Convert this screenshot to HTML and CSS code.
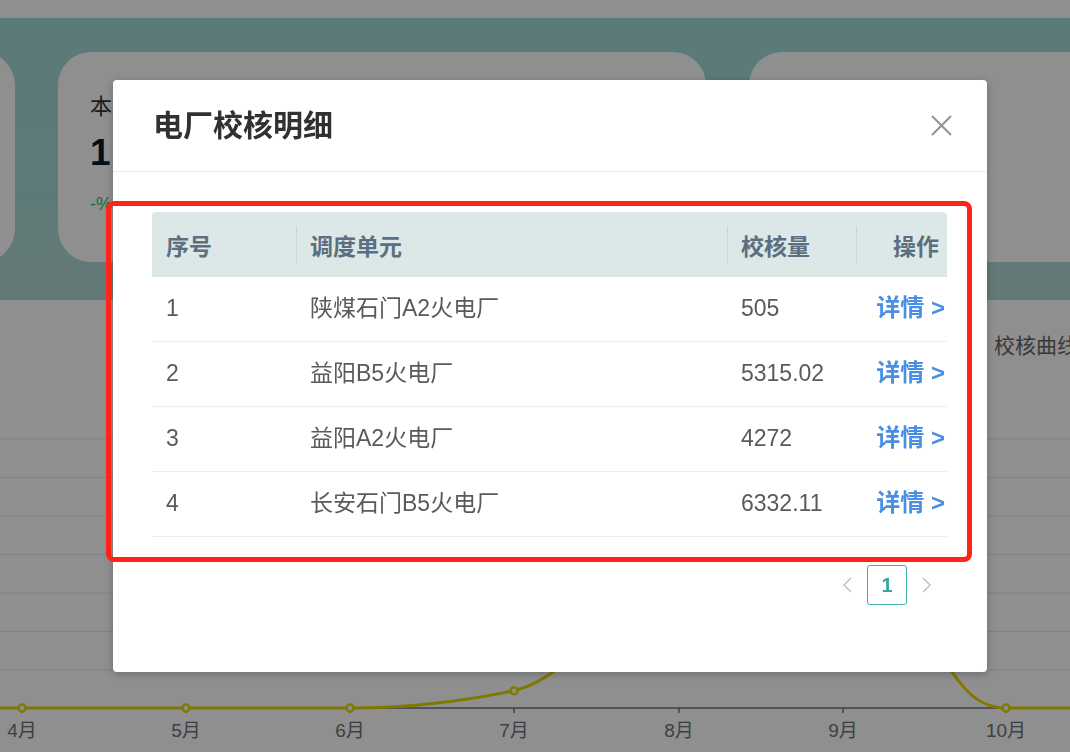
FILE: index.html
```html
<!DOCTYPE html>
<html lang="zh-CN">
<head>
<meta charset="utf-8">
<title>电厂校核明细</title>
<link rel="stylesheet" href="styles.css">
</head>
<body>
<div class="page">
  <div class="topbar"></div>
  <section class="band">
    <div class="cards">
      <div class="card"></div>
      <div class="card">
        <div class="card-label">本月校核电量</div>
        <div class="card-value">1<span class="card-unit">MWh</span></div>
        <div class="card-rate">-%</div>
      </div>
      <div class="card"></div>
    </div>
  </section>
  <section class="chart">
    <div class="chart-title">校核曲线</div>
    <svg class="chart-svg" width="1070" height="394" viewBox="0 0 1070 394">
      <g stroke="#e0e6f1" stroke-width="1">
        <line x1="0" y1="81" x2="1070" y2="81"/>
        <line x1="0" y1="119.5" x2="1070" y2="119.5"/>
        <line x1="0" y1="158" x2="1070" y2="158"/>
        <line x1="0" y1="196.5" x2="1070" y2="196.5"/>
        <line x1="0" y1="235" x2="1070" y2="235"/>
        <line x1="0" y1="273.5" x2="1070" y2="273.5"/>
        <line x1="0" y1="312" x2="1070" y2="312"/>
      </g>
      <line x1="0" y1="350" x2="1070" y2="350" stroke="#6e7079" stroke-width="1.5"/>
      <g stroke="#6e7079" stroke-width="1.5">
        <line x1="22" y1="350" x2="22" y2="355"/>
        <line x1="186" y1="350" x2="186" y2="355"/>
        <line x1="350" y1="350" x2="350" y2="355"/>
        <line x1="514" y1="350" x2="514" y2="355"/>
        <line x1="679" y1="350" x2="679" y2="355"/>
        <line x1="843" y1="350" x2="843" y2="355"/>
        <line x1="1006" y1="350" x2="1006" y2="355"/>
      </g>
      <g class="axis-label" fill="#6e7079" text-anchor="middle">
        <text x="22" y="379">4月</text>
        <text x="186" y="379">5月</text>
        <text x="350" y="379">6月</text>
        <text x="514" y="379">7月</text>
        <text x="679" y="379">8月</text>
        <text x="843" y="379">9月</text>
        <text x="1006" y="379">10月</text>
      </g>
      <path d="M-150,350 L350,350 C400,350 460,344 514,332.7 C530,329 545,320 556,312 C600,270 640,120 679,100 C720,80 800,80 843,110 C890,150 930,280 952,314 C965,333 980,350 1006,350 L1080,350" fill="none" stroke="#e6d700" stroke-width="3"/>
      <g fill="#fff" stroke="#e6d700" stroke-width="2.5">
        <circle cx="22" cy="350" r="3.5"/>
        <circle cx="186" cy="350" r="3.5"/>
        <circle cx="350" cy="350" r="3.5"/>
        <circle cx="514" cy="332.7" r="3.5"/>
        <circle cx="1006" cy="350" r="3.5"/>
      </g>
    </svg>
  </section>
</div>

<div class="mask">
  <div class="dialog">
    <div class="dialog-header">
      <h2 class="dialog-title">电厂校核明细</h2>
      <button class="dialog-close" aria-label="关闭">
        <svg width="21" height="21" viewBox="0 0 21 21"><path d="M1 1 L20 20 M20 1 L1 20" stroke="#909399" stroke-width="2" fill="none"/></svg>
      </button>
    </div>
    <div class="dialog-body">
      <table class="grid">
        <colgroup>
          <col class="c1"><col class="c2"><col class="c3"><col class="c4">
        </colgroup>
        <thead>
          <tr><th>序号</th><th>调度单元</th><th>校核量</th><th class="op">操作</th></tr>
        </thead>
        <tbody>
          <tr><td>1</td><td>陕煤石门A2火电厂</td><td>505</td><td class="op"><a class="link" href="#">详情 &gt;</a></td></tr>
          <tr><td>2</td><td>益阳B5火电厂</td><td>5315.02</td><td class="op"><a class="link" href="#">详情 &gt;</a></td></tr>
          <tr><td>3</td><td>益阳A2火电厂</td><td>4272</td><td class="op"><a class="link" href="#">详情 &gt;</a></td></tr>
          <tr><td>4</td><td>长安石门B5火电厂</td><td>6332.11</td><td class="op"><a class="link" href="#">详情 &gt;</a></td></tr>
        </tbody>
      </table>
      <div class="pager">
        <span class="pg-btn"><svg width="12" height="16" viewBox="0 0 12 16"><polyline points="10,1 3,8 10,15" fill="none" stroke="#c0c4cc" stroke-width="1.6"/></svg></span>
        <span class="pg-btn pg-num">1</span>
        <span class="pg-btn"><svg width="12" height="16" viewBox="0 0 12 16"><polyline points="2,1 9,8 2,15" fill="none" stroke="#c0c4cc" stroke-width="1.6"/></svg></span>
      </div>
    </div>
    <div class="highlight"></div>
  </div>
</div>
</body>
</html>
```

FILE: styles.css
```css
* {
  box-sizing: border-box;
  margin: 0;
  padding: 0;
}

html,
body {
  width: 1070px;
  height: 752px;
  overflow: hidden;
}

body {
  font-family: "Liberation Sans", "Noto Sans CJK SC", sans-serif;
  background: #fff;
}

.page {
  width: 1070px;
  height: 752px;
  overflow: hidden;
}

.topbar {
  height: 18px;
  background: #fff;
}

.band {
  height: 282px;
  padding-top: 34px;
  background: linear-gradient(180deg, #a3dbd7 0%, #a6dad6 60%, #b4d8d5 100%);
  overflow: hidden;
}

.cards {
  display: flex;
  gap: 43px;
  margin-left: -633px;
}

.card {
  flex: 0 0 648px;
  height: 210px;
  background: #fff;
  border-radius: 33px;
  padding: 41px 0 0 32px;
}

.card-label {
  font-size: 22px;
  line-height: 28px;
  color: #333;
  white-space: nowrap;
}

.card-value {
  margin-top: 12px;
  font-size: 37px;
  line-height: 40px;
  font-weight: 700;
  color: #0b1a33;
}

.card-unit {
  font-size: 18px;
  font-weight: 400;
  color: #f5a623;
  margin-left: 6px;
}

.card-rate {
  margin-top: 14px;
  font-size: 18px;
  line-height: 22px;
  color: #2fbf71;
}

.chart {
  height: 452px;
  background: #fff;
}

.chart-title {
  padding-top: 34px;
  margin-left: 994px;
  font-size: 21px;
  line-height: 24px;
  color: #666;
  white-space: nowrap;
}

.chart-svg {
  display: block;
}

.axis-label {
  font-size: 19px;
  font-family: "Liberation Sans", "Noto Sans CJK SC", sans-serif;
}

.mask {
  position: fixed;
  inset: 0;
  background: rgba(0, 0, 0, 0.44);
}

.dialog {
  position: relative;
  width: 874px;
  margin: 80px 0 0 113px;
  background: #fff;
  border-radius: 4px;
  box-shadow: 0 2px 10px rgba(0, 0, 0, 0.25);
}

.dialog-header {
  height: 92px;
  display: flex;
  align-items: center;
  justify-content: space-between;
  padding: 0 35px 0 40px;
  border-bottom: 1px solid #ececec;
}

.dialog-title {
  font-size: 30px;
  line-height: 1;
  font-weight: 700;
  color: #303133;
}

.dialog-close {
  border: 0;
  background: none;
  width: 21px;
  height: 21px;
  display: flex;
}

.dialog-body {
  padding: 40px 40px 67px 39px;
}

.grid {
  width: 795px;
  table-layout: fixed;
  border-collapse: separate;
  border-spacing: 0;
}

.c1 { width: 144px; }
.c2 { width: 431px; }
.c3 { width: 129px; }
.c4 { width: 91px; }

.grid th {
  position: relative;
  height: 65px;
  background: #dce8e8;
  font-size: 23px;
  font-weight: 700;
  color: #5b6f80;
  text-align: left;
  padding: 0 14px;
  vertical-align: middle;
  white-space: nowrap;
}

.grid th:first-child {
  border-top-left-radius: 4px;
}

.grid th:last-child {
  border-top-right-radius: 4px;
}

.grid th + th::before {
  content: "";
  position: absolute;
  left: 0;
  top: 14px;
  bottom: 14px;
  width: 1px;
  background: #c9d5d5;
}

.grid tbody tr {
  height: 65px;
}

.grid td {
  border-bottom: 1px solid #ebeef5;
  font-size: 23px;
  line-height: 28px;
  color: #5a5a5a;
  padding: 0 14px 2px;
  vertical-align: middle;
  white-space: nowrap;
}

.grid th.op {
  text-align: right;
  padding-right: 8px;
}

.grid td.op {
  text-align: right;
  padding-right: 2px;
  overflow: visible;
}

.link {
  color: #4a8fe2;
  font-size: 24px;
  font-weight: 700;
  text-decoration: none;
}

.pager {
  display: flex;
  justify-content: flex-end;
  margin-top: 28px;
  height: 40px;
}

.pg-btn {
  width: 40px;
  height: 40px;
  display: flex;
  align-items: center;
  justify-content: center;
}

.pg-num {
  border: 1px solid #3db3aa;
  border-radius: 3px;
  color: #35a79e;
  font-weight: 700;
  font-size: 20px;
}

.highlight {
  position: absolute;
  left: -7px;
  top: 121px;
  width: 866px;
  height: 361px;
  border: 5px solid #ff2413;
  border-radius: 8px;
  pointer-events: none;
}
```
